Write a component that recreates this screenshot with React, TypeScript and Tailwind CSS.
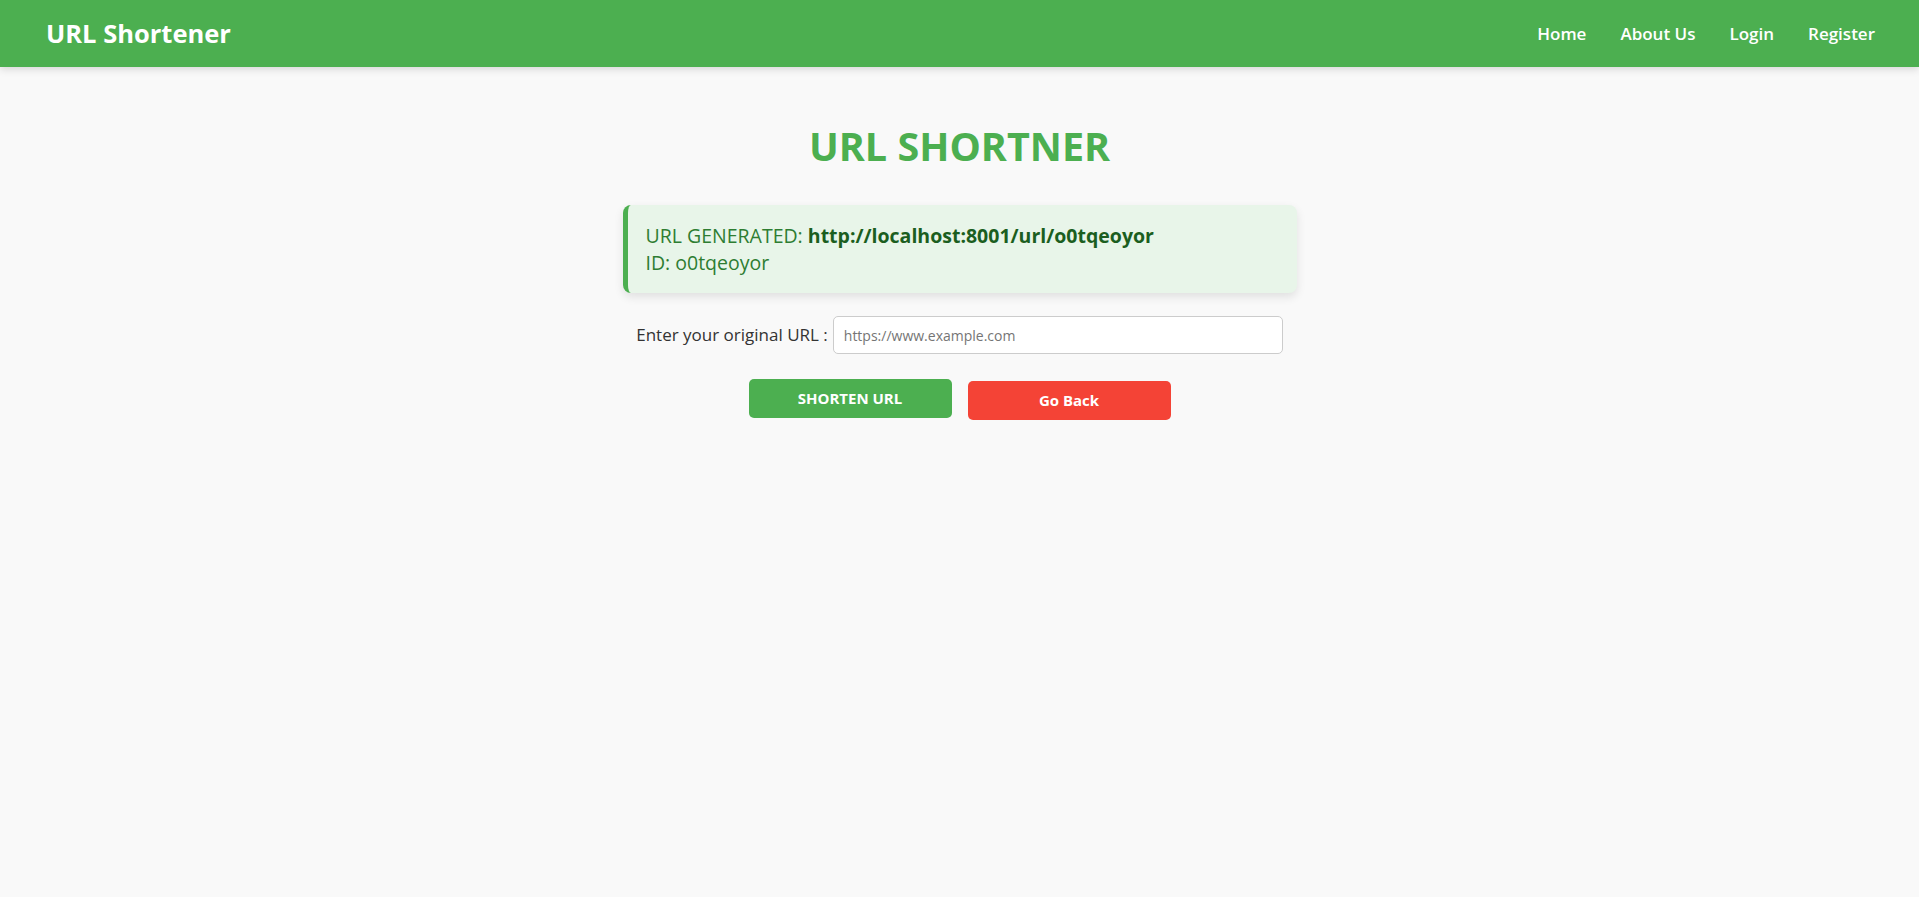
import React from "react";

const NavLink = ({ label }: { label: string }) => (
  <a href="#" className="text-white font-semibold text-[17px] hover:underline">
    {label}
  </a>
);

const App = () => {
  return (
    <div className="min-h-[897px] bg-[#f9f9f9] font-['Open_Sans',sans-serif] text-[#333]">
      {/* top bar */}
      <header className="h-[67px] bg-[#4caf50] flex items-center justify-between pl-[46px] pr-[44px] shadow-[0_2px_8px_rgba(0,0,0,0.15)]">
        <h1 className="text-white font-bold text-[25.5px] leading-none">URL Shortener</h1>
        <nav className="flex items-center gap-x-[34px]">
          <NavLink label="Home" />
          <NavLink label="About Us" />
          <NavLink label="Login" />
          <NavLink label="Register" />
        </nav>
      </header>

      <main className="flex flex-col items-center">
        <h2 className="mt-[55px] text-[39.5px] leading-[48px] font-bold text-[#4caf50]">URL SHORTNER</h2>

        {/* generated url alert */}
        <div className="mt-[35px] w-[674px] rounded-lg bg-[#e8f5e9] border-l-[5px] border-[#4caf50] px-[18px] py-[17px] shadow-[0_4px_10px_rgba(0,0,0,0.1)] text-[19.5px] leading-[27px] text-[#2e7d32]">
          <p>
            URL GENERATED: <span className="font-bold text-[#1b5e20]">http://localhost:8001/url/o0tqeoyor</span>
          </p>
          <p>ID: o0tqeoyor</p>
        </div>

        <form className="mt-[23px] flex flex-col items-center" onSubmit={(e) => e.preventDefault()}>
          <div className="flex items-center gap-x-[5px]">
            <label htmlFor="url" className="text-[17px]">Enter your original URL :</label>
            <input
              id="url"
              type="text"
              placeholder="https://www.example.com"
              className="w-[450px] h-[38px] px-[10px] bg-white border border-[#ccc] rounded-[5px] text-[14px] placeholder:text-[#757575] outline-none"
            />
          </div>
          <div className="mt-[25px] flex items-start gap-x-[16px]">
            <button type="submit" className="w-[203px] h-[39px] rounded-[5px] bg-[#4caf50] text-white font-bold text-[15px]">
              SHORTEN URL
            </button>
            <button type="button" className="mt-[2px] w-[203px] h-[39px] rounded-[5px] bg-[#f44336] text-white font-bold text-[15px]">
              Go Back
            </button>
          </div>
        </form>
      </main>
    </div>
  );
};

export default App;
